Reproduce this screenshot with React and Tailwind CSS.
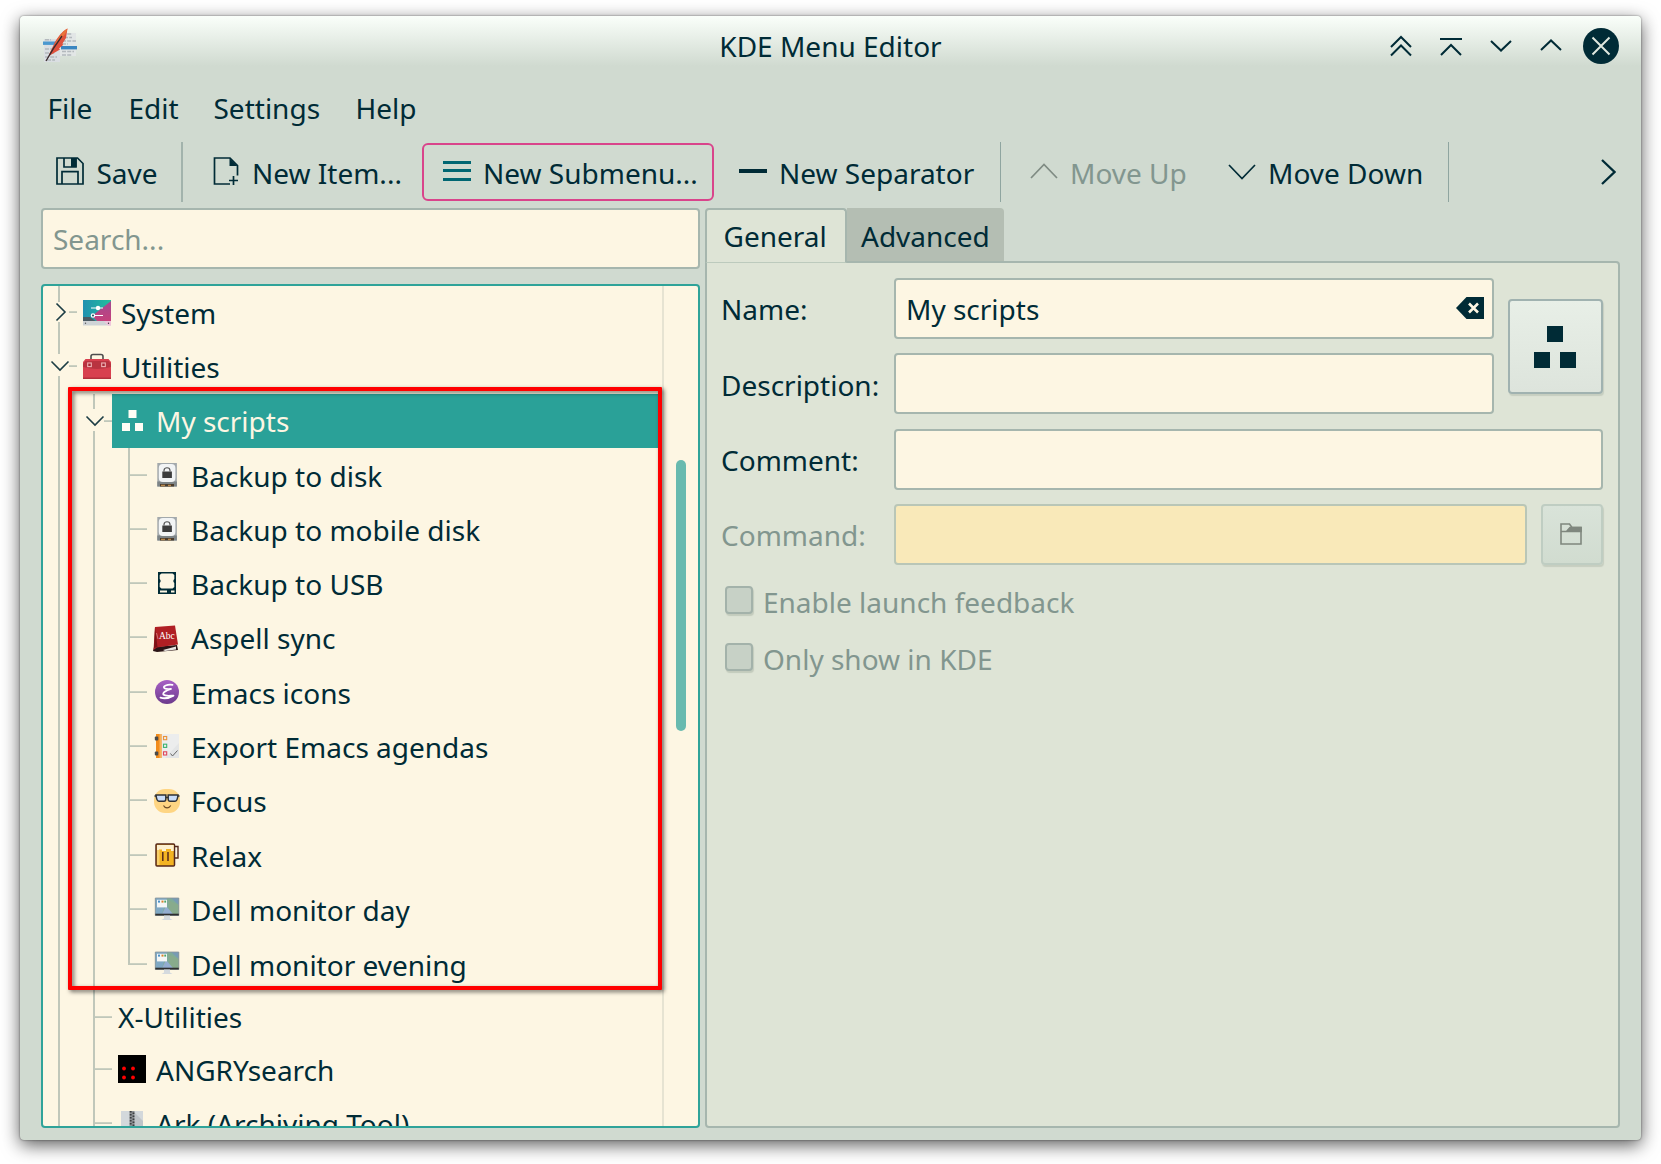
import React from "react";

const INK = "#002b36";
const GUIDE = "#c0c7ba";

function Chevron({ dir, w, h, color = INK, sw = 2, className = "" }) {
  const pts = {
    up: `1,${h - 1} ${w / 2},1.5 ${w - 1},${h - 1}`,
    down: `1,1 ${w / 2},${h - 1.5} ${w - 1},1`,
    right: `1,1 ${w - 1.5},${h / 2} 1,${h - 1}`,
  }[dir];
  return (
    <svg width={w} height={h} className={`shrink-0 ${className}`} fill="none" stroke={color} strokeWidth={sw}>
      <polyline points={pts} />
    </svg>
  );
}

function AppIcon() {
  return (
    <svg width="36" height="36" viewBox="0 0 36 36" className="shrink-0">
      <rect x="2" y="11" width="16" height="23" fill="#dadee2" />
      <rect x="18" y="5" width="16" height="23" fill="#e2e6e6" />
      <g stroke="#b3b9bd" strokeWidth="1.6" strokeDasharray="4 1.2">
        <path d="M3 11.700h6M3 21h12M3 25h10M3 29h12M5 32h8M20 6h10M22 9.500h8M20 13h14M20 16h6M20 23.500h12M20 27h10" />
      </g>
      <rect x="1" y="13.500" width="15" height="3.400" fill="#4a98cf" />
      <rect x="19" y="18" width="16" height="3.400" fill="#3a86c0" />
      <path d="M25.500 0.500C22 2 17 7 13 14L7.500 25.500C7 27 7.500 28 8.500 27L18 21.500L17 20.500L21 17L20.500 15.500L24 10Z" fill="#e0503c" />
      <path d="M25.500 0.500C20 4 16 10 12.500 17L16 14C20 9 24 7 25.500 0.500Z" fill="#e8743a" />
      <path d="M20 8C14 16 10 22 4 33" stroke="#3b2a2e" strokeWidth="1.300" fill="none" />
    </svg>
  );
}

function SaveIcon() {
  return (
    <svg width="28" height="28" viewBox="0 0 28 28" fill="none" stroke={INK} strokeWidth="1.7" className="shrink-0">
      <path d="M1 1H21.500L27 6.500V27H1Z" />
      <path d="M8 1V10H20V1" />
      <rect x="15" y="1" width="5.500" height="9" fill={INK} stroke="none" />
      <path d="M6 27V14.700H22V27" />
    </svg>
  );
}

function NewItemIcon() {
  return (
    <svg width="26" height="28" viewBox="0 0 26 28" fill="none" stroke={INK} strokeWidth="1.7" className="shrink-0">
      <path d="M17 27H1.500V1H17L24.500 8.500V18.500" />
      <path d="M16.500 1V9H24.500Z" fill={INK} stroke="none" />
      <path d="M20.500 19V28M16 23.500H25" />
    </svg>
  );
}

function Blocks({ size, color }) {
  return (
    <svg width={size} height={size} viewBox="0 0 42 42" fill={color} className="shrink-0">
      <rect x="13" y="0" width="16" height="16" />
      <rect x="0" y="26" width="16" height="16" />
      <rect x="26" y="26" width="16" height="16" />
    </svg>
  );
}

function Icon({ name }) {
  const p = { width: 28, height: 28, viewBox: "0 0 28 28", className: "shrink-0" };
  switch (name) {
    case "system":
      return (
        <svg {...p}>
          <defs>
            <linearGradient id="sysA" x1="0" y1="0" x2="1" y2="0">
              <stop offset="0" stopColor="#2190b0" />
              <stop offset="1" stopColor="#1fbf9c" />
            </linearGradient>
            <linearGradient id="sysB" x1="0" y1="0" x2="0" y2="1">
              <stop offset="0" stopColor="#a14a92" />
              <stop offset="1" stopColor="#c8407a" />
            </linearGradient>
          </defs>
          <rect y="1" width="28" height="22" fill="url(#sysA)" />
          <path d="M28 2V23H15L9 17Z" fill="url(#sysB)" />
          <path d="M0 23V18H7L14 23Z" fill="#4b5a63" />
          <rect y="22" width="28" height="4.500" fill="#cfd3d6" />
          <path d="M21 22.500L28 22V26.500H25Z" fill="#f0c4dc" />
          <path d="M8 9H20M11 16.500H20" stroke="#fff" strokeWidth="1" />
          <circle cx="15" cy="9" r="2.200" fill="#fff" />
          <circle cx="10" cy="16.500" r="1.700" fill="#2a5665" stroke="#fff" strokeWidth="1.200" />
          <circle cx="2.500" cy="24.300" r=".7" fill="#555" />
          <circle cx="25.500" cy="24.300" r=".7" fill="#333" />
        </svg>
      );
    case "utilities":
      return (
        <svg {...p}>
          <path d="M8 7V3.500C8 2 9 1.500 10 1.500H18C19 1.500 20 2 20 3.500V7" fill="none" stroke="#4d4d4d" strokeWidth="1.600" />
          <path d="M2.500 6H25.500L28 9V26H0V9Z" fill="#d8404f" />
          <path d="M0 11L2.500 8H25.500L28 11V14C18 16.500 10 16.500 0 14Z" fill="#b93340" />
          <rect y="24.500" width="28" height="1.500" fill="#b32f3c" />
          <rect x="4.700" y="10" width="3.600" height="3.600" fill="#a82835" stroke="#efb3b6" strokeWidth="1.100" />
          <rect x="18.700" y="10" width="3.600" height="3.600" fill="#a82835" stroke="#efb3b6" strokeWidth="1.100" />
        </svg>
      );
    case "lockdisk":
      return (
        <svg {...p}>
          <rect x="4.300" y="1" width="19.600" height="23.500" fill="#a3a9ac" />
          <rect x="4.300" y="19.500" width="19.600" height="5" fill="#7d8487" />
          <rect x="5.800" y="2" width="16.600" height="18" rx="4" fill="#f2f4f5" />
          <rect x="7" y="22" width="14" height="2.500" fill="#4b3c2c" />
          <path d="M8 23.500H12M15 23.500H18" stroke="#b8894f" strokeWidth="1.500" />
          <rect x="9.300" y="9.500" width="9.600" height="6.500" fill="#3c3c3c" />
          <path d="M11 9.500V8.500C11 4.800 17 4.800 17 8.500V9.500" fill="none" stroke="#555" strokeWidth="1.200" />
        </svg>
      );
    case "usb":
      return (
        <svg {...p}>
          <path fillRule="evenodd" fill={INK} d="M5 2H23V24H5ZM8.500 3.500L6.700 5V9C8 10 8 12 6.700 13V17L8.500 18.500H19.500L21.300 17V13C20 12 20 10 21.300 9V5L19.500 3.500ZM7 20.500V22.500H14V20.500ZM18 20.500V22.500H21.500V20.500Z" />
        </svg>
      );
    case "aspell":
      return (
        <svg {...p}>
          <path d="M0 26L1 22L24 20L25 25L4 27Z" fill="#2a1416" />
          <path d="M10 25L23 21.500V24.500L12 26Z" fill="#e9e6e2" />
          <path d="M2 2L22 0.500L25 19.500L4 22.500L0.500 25Z" fill="#b01f24" />
          <path d="M2 2L4.500 22L1 23Z" fill="#7c1216" />
          <path d="M3.500 8L5 14" stroke="#d88" strokeWidth=".8" />
          <text x="6" y="14" fontSize="9.500" fill="#fff" fontFamily="Liberation Serif, serif">Abc</text>
        </svg>
      );
    case "emacs":
      return (
        <svg {...p}>
          <defs>
            <linearGradient id="em" x1="0" y1="0" x2="0" y2="1">
              <stop offset="0" stopColor="#a860c6" />
              <stop offset="1" stopColor="#6c3a8c" />
            </linearGradient>
          </defs>
          <circle cx="14" cy="13" r="12" fill="url(#em)" />
          <path d="M19.500 5.800C14.500 5 9 7.200 11.500 9.300C13 10.300 15.500 10.200 18 10C12.500 11.500 9.200 14 10.500 15.700C12 17.400 16 16.800 20.500 16.600C17 18.600 12 20 7.500 18.600" fill="none" stroke="#fff" strokeWidth="1.800" strokeLinecap="round" strokeLinejoin="round" />
        </svg>
      );
    case "agenda":
      return (
        <svg {...p}>
          <rect x="7" y="1" width="19" height="24" fill="#eceded" />
          <path d="M26 10V25H12Z" fill="#e3e5e6" />
          <rect x="3" y="1" width="5.500" height="24" fill="#f28c1c" />
          <rect x="6.500" y="1" width="2" height="24" fill="#f7b25c" />
          <rect x="1.800" y="3.500" width="3.500" height="4" rx="1" fill="#4a4a4a" />
          <rect x="1.800" y="18.500" width="3.500" height="4" rx="1" fill="#4a4a4a" />
          <rect x="10.500" y="3.500" width="3.200" height="3.200" fill="none" stroke="#e8923a" strokeWidth="1.100" />
          <rect x="10.500" y="11.200" width="3.200" height="3.200" fill="none" stroke="#3cb371" strokeWidth="1.100" />
          <rect x="10.500" y="18.800" width="3.200" height="3.200" fill="none" stroke="#e0455a" strokeWidth="1.100" />
          <path d="M17.500 20.500L19.500 23L24.500 17.500" fill="none" stroke="#666" strokeWidth="1" />
        </svg>
      );
    case "focus":
      return (
        <svg {...p}>
          <rect x="1" y="1" width="26" height="24" rx="11" fill="#fed583" />
          <path d="M1.500 8H4M24 8H26.500M12.500 9.500H15.500" stroke="#2f3237" strokeWidth="1.600" />
          <path d="M3 7H12.800V11C12.800 12.800 12 13.300 11 13.300H6C4.500 13.300 3.500 12.500 3 7Z" fill="#c9dcf8" stroke="#2f3237" strokeWidth="1.500" />
          <path d="M15.200 7H25C24.500 12.500 23.500 13.300 22 13.300H17C16 13.300 15.200 12.800 15.200 11Z" fill="#c9dcf8" stroke="#2f3237" strokeWidth="1.500" />
          <path d="M10.500 17.500C12 20.700 16 20.700 17.800 17.500" fill="none" stroke="#6b4a26" strokeWidth="1.100" />
        </svg>
      );
    case "beer":
      return (
        <svg {...p}>
          <rect x="3" y="2" width="18.500" height="22" rx="1" fill="#f3b322" stroke="#55281c" strokeWidth="1.500" />
          <path d="M4 3H20.700V9H18V7H13V9H9V7.500H6V9H4Z" fill="#fdf0cf" />
          <path d="M4 8V23H6.500V8Z" fill="#f8cf6b" />
          <path d="M9.800 10V19M15 10V19" stroke="#55281c" strokeWidth="1.500" />
          <path d="M21.500 4.500H25V16H21.500" fill="none" stroke="#55281c" strokeWidth="1.400" />
        </svg>
      );
    case "monitor":
      return (
        <svg {...p}>
          <rect x="2.300" y="1" width="23.500" height="17.500" fill="#7fab98" />
          <path d="M2.300 1H14L9 17H2.300Z" fill="#7fa8c4" />
          <path d="M15 3L25.800 8V17H17Z" fill="#88ab8c" />
          <path d="M18 1H25.800V8Z" fill="#789bb4" />
          <path d="M13 9L20 17H9Z" fill="#93add0" />
          <rect x="4" y="2.800" width="10" height="7.600" fill="#f4f6f6" />
          <rect x="5" y="3.600" width="2" height="2" fill="#4a90c8" />
          <rect x="8.500" y="3.600" width="2" height="2" fill="#d9822b" />
          <rect x="11.300" y="3.600" width="1.800" height="2" fill="#4aa564" />
          <path d="M2.300 1H25.800V18.500H2.300Z" fill="none" stroke="#8a949a" strokeWidth=".8" />
          <rect x="2.300" y="16.700" width="23.500" height="1.800" fill="#2f2f2f" />
          <path d="M11 18.500H17V21.500L19.500 23H8.500L11 21.500Z" fill="#d5dade" />
        </svg>
      );
    case "angry":
      return (
        <svg {...p}>
          <rect width="28" height="28" fill="#000" />
          <g fill="#f00">
            <circle cx="6" cy="13.500" r="1.900" />
            <circle cx="15" cy="13.500" r="1.900" />
            <circle cx="6" cy="22.500" r="1.900" />
            <circle cx="15" cy="22.500" r="1.900" />
          </g>
        </svg>
      );
    case "ark":
      return (
        <svg {...p}>
          <rect x="3" y="2" width="22" height="26" fill="#d3d8db" />
          <path d="M17 4L25 12V28H14Z" fill="#bfc4c8" />
          <rect x="11.500" y="2" width="5" height="26" fill="#8b8f92" />
          <path d="M12.700 2V28M15.500 3.500V28" stroke="#3a3d3f" strokeWidth="1.800" strokeDasharray="1.500 1.500" />
        </svg>
      );
    default:
      return null;
  }
}

/* One 35px wide column of the tree's branch lines. */
function Branch({ kind, h, x = 17, mid = 27 }) {
  const line = (y1, y2) => <rect x={x - 1} y={y1} width="2" height={y2 - y1} fill={GUIDE} />;
  const tick = (from) => <rect x={from} y={mid - 0.8} width={35 - from} height="1.8" fill={GUIDE} />;
  return (
    <svg width="35" height={h} className="shrink-0">
      {kind === "line" && line(0, h)}
      {kind === "tee" && <>{line(0, h)}{tick(x)}</>}
      {kind === "last" && <>{line(0, mid + 1)}{tick(x)}</>}
      {kind === "closed" && (
        <>
          {line(0, 16)}{line(36, h)}
          <rect x="27" y={mid - 0.8} width="8" height="1.800" fill={GUIDE} />
          <polyline points={`14.500,${mid - 8.500} 23,${mid} 14.500,${mid + 8.500}`} fill="none" stroke="#1c3d45" strokeWidth="1.600" />
        </>
      )}
      {kind === "open" && (
        <>
          {line(0, 15)}{line(37, h)}
          <rect x="27" y={mid - 0.8} width="8" height="1.800" fill={GUIDE} />
          <polyline points={`9.500,${mid - 4.500} 18,${mid + 4} 26.500,${mid - 4.500}`} fill="none" stroke="#1c3d45" strokeWidth="1.600" />
        </>
      )}
    </svg>
  );
}

const ROWS = [
  { t: "System", icon: "system", h: "h-[53px]", n: 53, g: ["closed"], mid: 26 },
  { t: "Utilities", icon: "utilities", h: "h-[55px]", n: 55, g: ["open"] },
  { t: "My scripts", icon: "blocks", h: "h-[54px]", n: 54, g: ["line", "open"], sel: true },
  { t: "Backup to disk", icon: "lockdisk", h: "h-[54px]", n: 54, g: ["line", "line", "tee"] },
  { t: "Backup to mobile disk", icon: "lockdisk", h: "h-[54px]", n: 54, g: ["line", "line", "tee"] },
  { t: "Backup to USB", icon: "usb", h: "h-[54px]", n: 54, g: ["line", "line", "tee"] },
  { t: "Aspell sync", icon: "aspell", h: "h-[55px]", n: 55, g: ["line", "line", "tee"] },
  { t: "Emacs icons", icon: "emacs", h: "h-[54px]", n: 54, g: ["line", "line", "tee"] },
  { t: "Export Emacs agendas", icon: "agenda", h: "h-[54px]", n: 54, g: ["line", "line", "tee"] },
  { t: "Focus", icon: "focus", h: "h-[55px]", n: 55, g: ["line", "line", "tee"] },
  { t: "Relax", icon: "beer", h: "h-[54px]", n: 54, g: ["line", "line", "tee"] },
  { t: "Dell monitor day", icon: "monitor", h: "h-[55px]", n: 55, g: ["line", "line", "tee"] },
  { t: "Dell monitor evening", icon: "monitor", h: "h-[54px]", n: 54, g: ["line", "line", "last"] },
  { t: "X-Utilities", h: "h-[51px]", n: 51, g: ["line", "tee"], mid: 26 },
  { t: "ANGRYsearch", icon: "angry", h: "h-[54px]", n: 54, g: ["line", "tee"] },
  { t: "Ark (Archiving Tool)", icon: "ark", h: "h-[54px]", n: 54, g: ["line", "tee"] },
];

function TreeRow({ row }) {
  const child = row.g.length === 3;
  return (
    <div className={`flex shrink-0 ${row.h}`}>
      {row.g.map((k, i) => (
        <Branch key={i} kind={k} h={row.n} mid={row.mid} />
      ))}
      <div className={`flex flex-1 items-center gap-[10px] pl-[6px] ${row.sel ? "bg-[#2aa198] text-[#fdf6e3]" : ""}`}>
        {row.icon === "blocks" ? (
          <span className="flex w-7 pb-px pl-1">
            <Blocks size={21} color="#fffdf5" />
          </span>
        ) : row.icon ? (
          <span className={child ? "flex pt-[2px]" : "flex"}>
            <Icon name={row.icon} />
          </span>
        ) : null}
        <span className={row.sel ? "pb-px leading-none" : "pt-px leading-none"}>{row.t}</span>
      </div>
    </div>
  );
}

function Field({ className = "", children }) {
  return (
    <div className={`flex h-[61px] items-center rounded-[4px] border-2 border-[#a6b6ae] bg-[#fdf6e3] ${className}`}>{children}</div>
  );
}

function Check({ label }) {
  return (
    <label className="flex h-[57px] items-start pl-[4px]">
      <span className="h-[28px] w-[28px] rounded-[4px] border-2 border-[#a3b2aa] bg-[#c7d1c6] shadow-[1px_2px_1px_#c3cbbd]" />
      <span className="ml-[10px] pt-[2px] leading-[28px] text-[#82968f]">{label}</span>
    </label>
  );
}

function Divider() {
  return <div className="h-[60px] w-[2px] shrink-0 bg-[#a2b3ac]" />;
}

export default function App() {
  return (
    <div className="h-[1164px] w-[1661px] overflow-hidden bg-white pt-[16px] pl-[20px] font-['Noto_Sans',sans-serif] text-[28px] whitespace-nowrap text-[#002b36]">
      <div className="flex h-[1124px] w-[1621px] flex-col rounded-[4px] bg-[#d0dad0] shadow-[0_0_2px_rgba(0,0,0,0.55),0_5px_18px_rgba(0,0,0,0.65)]">
        {/* Title bar */}
        <div className="flex h-[60px] shrink-0 items-center rounded-t-[4px] bg-[linear-gradient(to_bottom,#fafffa_0px,#d0dad0_50px)] pl-[22px]">
          <AppIcon />
          <div className="flex flex-1 justify-center pl-[193px] leading-none">KDE Menu Editor</div>
          <div className="flex w-[251px] items-center">
            <svg width="22" height="22" fill="none" stroke={INK} strokeWidth="2" className="-mt-px">
              <polyline points="1,12 11,2 21,12" />
              <polyline points="1,20.500 11,10.500 21,20.500" />
            </svg>
            <svg width="22" height="22" fill="none" stroke={INK} strokeWidth="2" className="ml-[28px]">
              <path d="M0 4H22" />
              <polyline points="1,20 11,10 21,20" />
            </svg>
            <Chevron dir="down" w={22} h={12} className="ml-[28px]" />
            <Chevron dir="up" w={22} h={12} className="mb-[3px] ml-[28px]" />
            <svg width="36" height="36" className="ml-[21px]">
              <circle cx="18" cy="18" r="18" fill={INK} />
              <path d="M9.500 9.500L26.500 26.500M26.500 9.500L9.500 26.500" stroke="#dfe7df" strokeWidth="2" />
            </svg>
          </div>
        </div>

        {/* Menu bar */}
        <div className="flex h-[66px] shrink-0 items-center pb-[2px] pl-[27.500px] leading-none">
          <span className="w-[81px]">File</span>
          <span className="w-[85px]">Edit</span>
          <span className="w-[142px]">Settings</span>
          <span>Help</span>
        </div>

        {/* Toolbar */}
        <div className="flex h-[60px] shrink-0 items-center leading-none">
          <div className="flex w-[161px] items-center pl-[36px]">
            <span className="-mt-[3px]"><SaveIcon /></span>
            <span className="ml-[12.500px] pt-px">Save</span>
          </div>
          <Divider />
          <div className="flex w-[239px] items-center pl-[30px]">
            <span className="-mt-[3px]"><NewItemIcon /></span>
            <span className="ml-[13px] pt-px">New Item...</span>
          </div>
          <div className="flex h-[58px] w-[292px] items-center rounded-[6px] border-2 border-[#d9448b] pl-[19px]">
            <div className="flex w-[28px] flex-col gap-[5.500px] pb-[3px]">
              <div className="h-[3px] bg-[#006672]" />
              <div className="h-[3px] bg-[#006672]" />
              <div className="h-[3px] bg-[#006672]" />
            </div>
            <span className="ml-[12px] pt-px">New Submenu...</span>
          </div>
          <div className="flex w-[286px] items-center pl-[25px]">
            <div className="-mt-[2px] h-[4px] w-[28px] bg-[#002b36]" />
            <span className="ml-[12px] pt-px">New Separator</span>
          </div>
          <div className="h-[60px] w-px shrink-0 bg-[#8fa5a0]" />
          <div className="flex w-[217px] items-center pl-[29px]">
            <Chevron dir="up" w={28} h={16} color="#7f8b83" sw={1.7} className="-mt-[3px]" />
            <span className="ml-[12px] pt-px text-[#82968f]">Move Up</span>
          </div>
          <div className="flex w-[230px] items-center pl-[10px]">
            <Chevron dir="down" w={28} h={16} sw={1.7} className="-mt-px" />
            <span className="ml-[12px] pt-px">Move Down</span>
          </div>
          <div className="h-[60px] w-px shrink-0 bg-[#8fa5a0]" />
          <Chevron dir="right" w={15} h={26} sw={2.3} className="-mt-px ml-[152px]" />
        </div>

        {/* Body */}
        <div className="flex flex-1 pt-[6px] pl-[21px]">
          {/* Left pane */}
          <div className="flex w-[659px] shrink-0 flex-col">
            <Field className="pl-[10px] text-[#82968f]">
              <span className="leading-none">Search...</span>
            </Field>
            <div className="relative mt-[15px] flex h-[844px] rounded-[4px] border-2 border-[#2fa399] bg-[#fdf6e3]">
              <div className="-ml-px flex h-[840px] w-[622px] flex-col overflow-hidden border-r-2 border-[#e6e3d2] pr-[3px]">
                {ROWS.map((row) => (
                  <TreeRow key={row.t} row={row} />
                ))}
              </div>
              <div className="mt-[174px] ml-[12px] h-[271px] w-[10px] rounded-full bg-[#68baaf]" />
              <div className="absolute top-[101px] left-[25px] h-[603px] w-[594px] rounded-[1px] border-4 border-[#ff0000] drop-shadow-[2px_2px_2px_rgba(0,0,0,0.55)]" />
            </div>
          </div>

          {/* Right pane */}
          <div className="ml-[5px] flex w-[915px] shrink-0 flex-col">
            <div className="flex h-[53px] shrink-0 items-stretch leading-none">
              <div className="relative z-10 -mb-[2px] flex w-[142px] items-center rounded-t-[4px] border-2 border-b border-[#a6b6ae] border-b-[#bccabd] bg-[#dee4d6] pl-[16.500px]">
                General
              </div>
              <div className="flex w-[157px] items-center rounded-tr-[4px] bg-[#b4beb3] pt-[2px] pl-[14px]">Advanced</div>
            </div>
            <div className="flex h-[867px] flex-col rounded-[4px] rounded-tl-none border-2 border-[#a6b6ae] bg-[#dee4d6] pt-[15px] pl-[14px] leading-none">
              <div className="flex">
                <div className="flex flex-col gap-[14px]">
                  <div className="flex items-center">
                    <span className="w-[173px]">Name:</span>
                    <Field className="w-[600px] justify-between pr-[8px] pl-[10px]">
                      My scripts
                      <svg width="28" height="22" className="-mt-[2px]">
                        <path d="M0 11L10.500 0H28V22H10.500Z" fill={INK} />
                        <path d="M13 6.500L22 15.500M22 6.500L13 15.500" stroke="#fdf6e3" strokeWidth="2.600" />
                      </svg>
                    </Field>
                  </div>
                  <div className="flex items-center">
                    <span className="w-[173px] pt-[2px]">Description:</span>
                    <Field className="w-[600px]" />
                  </div>
                </div>
                <div className="mt-[21px] ml-[14px] flex h-[95px] w-[95px] items-center justify-center rounded-[4px] border-2 border-[#a0b2b0] bg-linear-to-b from-[#e8efe7] to-[#dde4dc] pr-px shadow-[1px_2px_1px_#c6cec0]">
                  <Blocks size={42} color={INK} />
                </div>
              </div>
              <div className="mt-[15px] flex items-center">
                <span className="w-[173px]">Comment:</span>
                <Field className="w-[709px]" />
              </div>
              <div className="mt-[14px] flex items-center">
                <span className="w-[173px] text-[#82968f]">Command:</span>
                <div className="h-[61px] w-[633px] rounded-[4px] border-2 border-[#b9c6b7] bg-[#f9e9b9]" />
                <div className="ml-[14px] flex h-[61px] w-[62px] items-center justify-center rounded-[4px] border-2 border-[#bfcdc2] bg-linear-to-b from-[#d9e3d9] to-[#d1dcd0] shadow-[1px_2px_1px_#c6cec0]">
                  <svg width="22" height="22" fill="none" stroke="#7f877e" strokeWidth="1.600" className="-mt-[2px] mr-[2px]">
                    <path d="M1 1H9.500L12 4.500H21V21H1Z" />
                    <path d="M1 8.500H6.500L10 4.500H21V8.500Z" />
                    <path d="M6.500 8.500L10.500 4H21.500V8.500Z" fill="#7f877e" stroke="none" />
                  </svg>
                </div>
              </div>
              <div className="mt-[21px] flex flex-col">
                <Check label="Enable launch feedback" />
                <Check label="Only show in KDE" />
              </div>
            </div>
          </div>
        </div>
      </div>
    </div>
  );
}
